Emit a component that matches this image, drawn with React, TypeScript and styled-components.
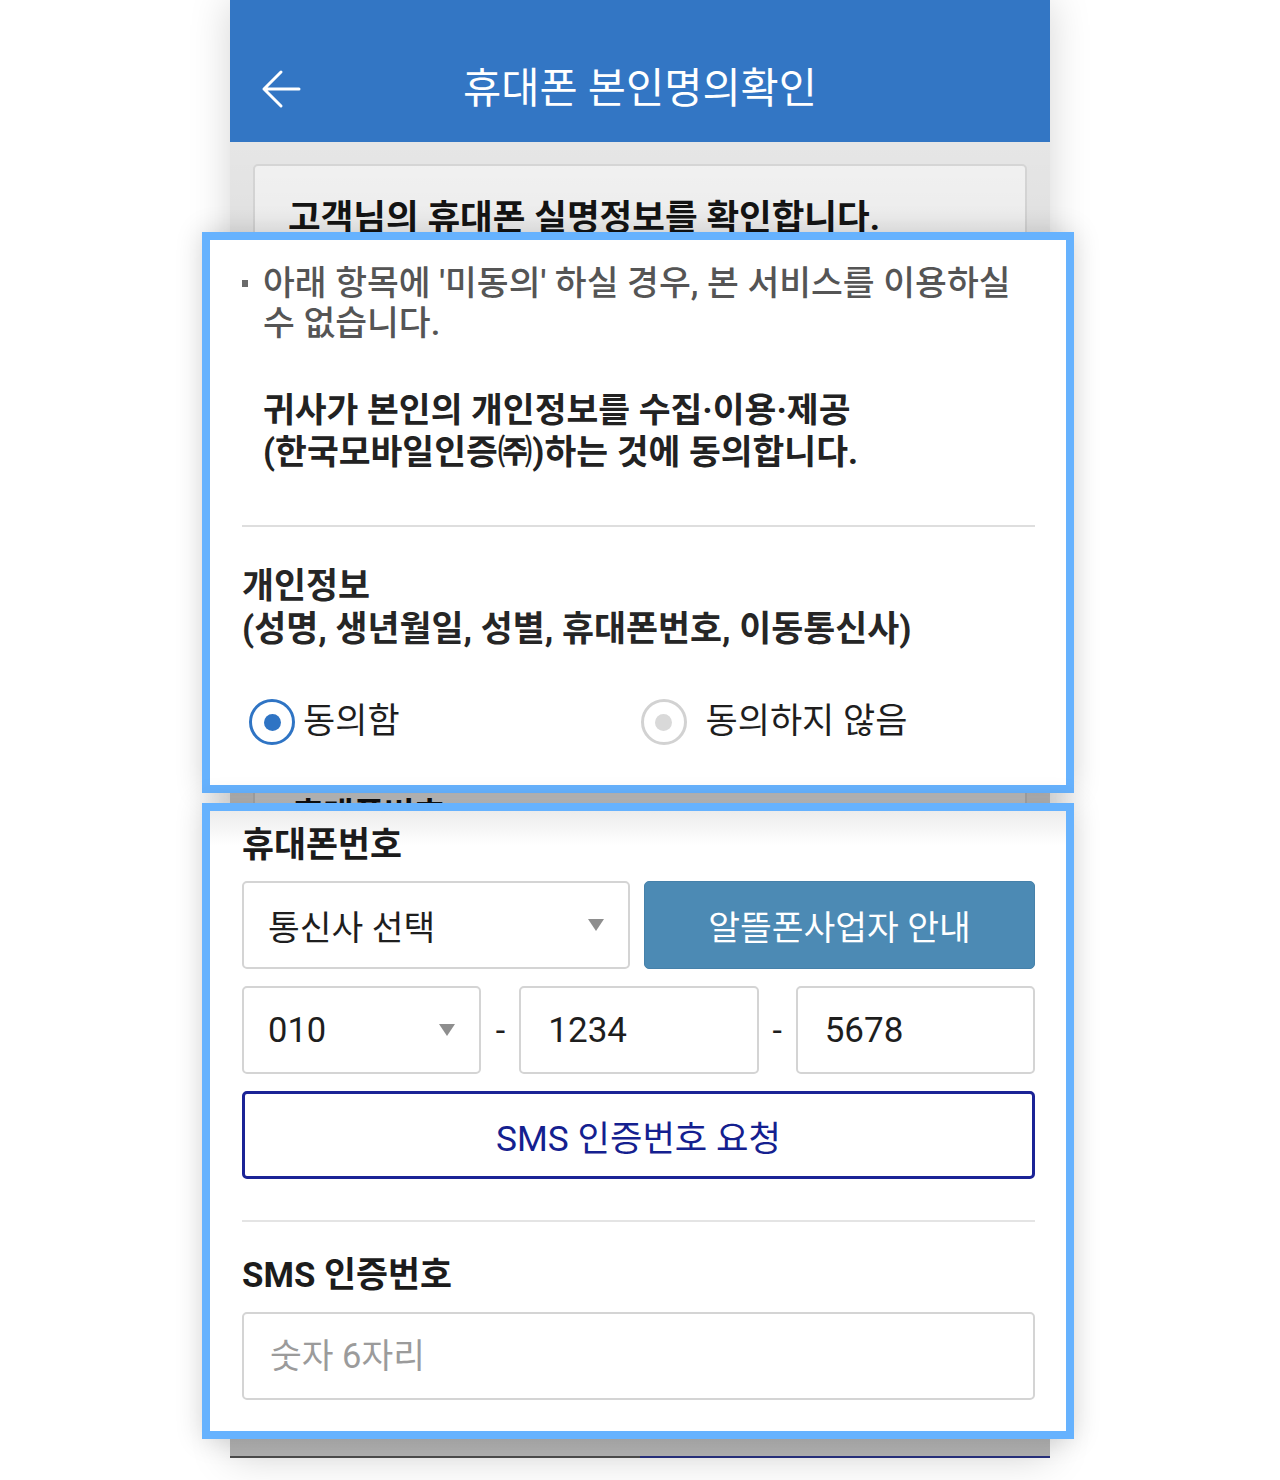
import React from "react";
import styled, { createGlobalStyle } from "styled-components";

const GlobalStyle = createGlobalStyle`
  html, body { margin: 0; padding: 0; background: #ffffff; }
  body { font-family: Roboto, "Noto Sans CJK KR", sans-serif; }
  * { box-sizing: border-box; }
`;

const Stage = styled.div`
  position: relative;
  width: 1280px;
  height: 1480px;
  overflow: hidden;
  background: #ffffff;
`;

/* ---------- phone screenshot (background) ---------- */

const Phone = styled.div`
  width: 820px;
  height: 1458px;
  margin: 0 auto;
  display: flex;
  flex-direction: column;
  background: #e6e6e6;
  box-shadow: 0 0 38px rgba(0, 0, 0, 0.17);
`;

const AppBar = styled.header`
  flex: none;
  height: 142px;
  padding-top: 35px;
  background: #3376c4;
  display: grid;
  grid-template-columns: 1fr auto 1fr;
  align-items: center;
`;

const BackButton = styled.button`
  justify-self: start;
  margin-left: 30px;
  width: 42px;
  height: 42px;
  padding: 0;
  border: none;
  background: transparent;
  display: flex;
  align-items: center;
  justify-content: center;
`;

const AppTitle = styled.h1`
  margin: 0;
  color: #ffffff;
  font-size: 41.5px;
  font-weight: 400;
  line-height: 50px;
`;

const Body = styled.main`
  position: relative;
  flex: 1;
  padding: 22px 23px 0;
  overflow: hidden;
  &::after {
    content: "";
    position: absolute;
    inset: 0;
    pointer-events: none;
    background: linear-gradient(
      rgba(0, 0, 0, 0) 0px,
      rgba(0, 0, 0, 0.19) 658px,
      rgba(0, 0, 0, 0.24) 100%
    );
  }
`;

const Card = styled.section`
  background: #f2f2f2;
  border: 2px solid #d6d6d6;
  border-radius: 5px;
  padding: 32px 33px 40px;
`;

const CardTitle = styled.h2`
  margin: 0;
  font-size: 35.5px;
  font-weight: 700;
  line-height: 40px;
  color: #141414;
`;

const HiddenSection = styled.div<{ $height: number }>`
  height: ${(p) => p.$height}px;
`;

const CardLabel = styled.div`
  padding-left: 5px;
  font-size: 33px;
  font-weight: 700;
  line-height: 40px;
  color: #141414;
`;

const FooterBar = styled.div`
  flex: none;
  height: 2px;
  display: flex;
`;

const FooterHalf = styled.div<{ $color: string }>`
  flex: 1;
  background: ${(p) => p.$color};
`;

/* ---------- callouts (overlay) ---------- */

const Callout = styled.div<{ $top: number; $height: number }>`
  position: absolute;
  left: 202px;
  top: ${(p) => p.$top}px;
  width: 872px;
  height: ${(p) => p.$height}px;
  border: 8px solid #66b2fe;
  background: #ffffff;
  box-shadow: 0 0 26px rgba(0, 0, 0, 0.16);
`;

const ConsentPanel = styled.div`
  height: 100%;
  padding: 23px 31px 0 32px;
  display: flex;
  flex-direction: column;
`;

const Notice = styled.div`
  display: flex;
  align-items: flex-start;
`;

const Bullet = styled.span`
  flex: none;
  width: 6px;
  height: 7px;
  margin: 17px 15px 0 0;
  background: #6a6a6a;
`;

const NoticeText = styled.p`
  margin: 0;
  font-size: 34.6px;
  font-weight: 500;
  line-height: 40px;
  color: #555555;
`;

const ConsentText = styled.p`
  margin: 46px 0 0 21px;
  font-size: 34.6px;
  font-weight: 700;
  line-height: 42px;
  color: #222222;
`;

const Divider = styled.hr<{ $mt: number; $color: string }>`
  margin: ${(p) => p.$mt}px 0 0;
  height: 2px;
  border: none;
  background: ${(p) => p.$color};
`;

const InfoTitle = styled.p`
  margin: 38px 0 0;
  font-size: 34.8px;
  font-weight: 700;
  line-height: 43px;
  color: #262626;
`;

const RadioRow = styled.div`
  margin-top: 46px;
  display: grid;
  grid-template-columns: 1fr 1fr;
  align-items: center;
`;

const RadioOption = styled.label<{ $offset: number; $gap: number }>`
  display: flex;
  align-items: center;
  gap: ${(p) => p.$gap}px;
  padding-left: ${(p) => p.$offset}px;
  font-size: 35px;
  font-weight: 400;
  line-height: 50px;
  color: #1e1e1e;
`;

const RadioCircle = styled.span<{ $checked: boolean }>`
  flex: none;
  width: 46px;
  height: 46px;
  border-radius: 50%;
  border: 3px solid ${(p) => (p.$checked ? "#2f74c4" : "#d2d2d2")};
  display: flex;
  align-items: center;
  justify-content: center;
  &::after {
    content: "";
    width: 17px;
    height: 17px;
    border-radius: 50%;
    background: ${(p) => (p.$checked ? "#2f74c4" : "#d9d9d9")};
  }
`;

const PhonePanel = styled.div`
  height: 100%;
  padding: 14px 31px 0 32px;
  display: flex;
  flex-direction: column;
  background: linear-gradient(#ececec 0px, #ffffff 34px);
`;

const SectionLabel = styled.div<{ $mt?: number }>`
  margin-top: ${(p) => p.$mt ?? 0}px;
  font-size: 34.8px;
  font-weight: 700;
  line-height: 40px;
  color: #1c1c1c;
`;

const Rows = styled.div`
  margin-top: 16px;
  display: flex;
  flex-direction: column;
  gap: 17px;
`;

const CarrierRow = styled.div`
  display: grid;
  grid-template-columns: 388px 1fr;
  gap: 14px;
  height: 88px;
`;

const NumberRow = styled.div`
  display: grid;
  grid-template-columns: 1fr 38px 1fr 37px 1fr;
  height: 88px;
`;

const Box = styled.div`
  height: 88px;
  border: 2px solid #d4d4d4;
  border-radius: 5px;
  background: #ffffff;
  display: flex;
  align-items: center;
  justify-content: space-between;
  padding: 0 24px 0 24px;
  font-size: 34.5px;
  font-weight: 400;
  color: #1e1e1e;
`;

const Caret = styled.span`
  width: 0;
  height: 0;
  border-left: 8px solid transparent;
  border-right: 8px solid transparent;
  border-top: 12px solid #8e8e8e;
`;

const TextField = styled.input`
  width: 100%;
  height: 88px;
  border: 2px solid #d4d4d4;
  border-radius: 5px;
  background: #ffffff;
  padding: 0 0 0 27px;
  font: inherit;
  font-size: 35px;
  color: #1e1e1e;
  outline: none;
  &::placeholder {
    color: #9b9b9b;
  }
`;

const Dash = styled.span`
  display: flex;
  align-items: center;
  justify-content: center;
  font-size: 34px;
  color: #1e1e1e;
`;

const InfoButton = styled.button`
  height: 88px;
  border: 1px solid #4681aa;
  border-radius: 5px;
  background: #4c8ab4;
  color: #ffffff;
  font: inherit;
  font-size: 34.5px;
  font-weight: 400;
`;

const SmsButton = styled.button`
  height: 88px;
  border: 3px solid #1b2396;
  border-radius: 5px;
  background: #ffffff;
  color: #14208f;
  font: inherit;
  font-size: 35.3px;
  font-weight: 400;
`;

const CodeField = styled(TextField)`
  margin-top: 17px;
  flex: none;
  padding-left: 26px;
  font-size: 34.5px;
`;

export default function App() {
  return (
    <Stage>
      <GlobalStyle />
      <Phone>
        <AppBar>
          <BackButton aria-label="뒤로">
            <svg width="40" height="40" viewBox="0 0 40 40" fill="none">
              <path
                d="M38 20H3M20 3L3 20L20 37"
                stroke="#ffffff"
                strokeWidth="3"
                strokeLinecap="round"
                strokeLinejoin="round"
              />
            </svg>
          </BackButton>
          <AppTitle>휴대폰 본인명의확인</AppTitle>
          <span />
        </AppBar>
        <Body>
          <Card>
            <CardTitle>고객님의 휴대폰 실명정보를 확인합니다.</CardTitle>
            <HiddenSection $height={557} />
            <CardLabel>휴대폰번호</CardLabel>
            <HiddenSection $height={520} />
          </Card>
        </Body>
        <FooterBar>
          <FooterHalf $color="#4b4b4b" />
          <FooterHalf $color="#27307b" />
        </FooterBar>
      </Phone>

      <Callout $top={232} $height={561}>
        <ConsentPanel>
          <Notice>
            <Bullet />
            <NoticeText>
              아래 항목에 '미동의' 하실 경우, 본 서비스를 이용하실
              <br />수 없습니다.
            </NoticeText>
          </Notice>
          <ConsentText>
            귀사가 본인의 개인정보를 수집·이용·제공
            <br />
            (한국모바일인증㈜)하는 것에 동의합니다.
          </ConsentText>
          <Divider $mt={52} $color="#dedede" />
          <InfoTitle>
            개인정보
            <br />
            (성명, 생년월일, 성별, 휴대폰번호, 이동통신사)
          </InfoTitle>
          <RadioRow>
            <RadioOption $offset={7} $gap={8}>
              <RadioCircle $checked />
              동의함
            </RadioOption>
            <RadioOption $offset={2} $gap={19}>
              <RadioCircle $checked={false} />
              동의하지 않음
            </RadioOption>
          </RadioRow>
        </ConsentPanel>
      </Callout>

      <Callout $top={803} $height={636}>
        <PhonePanel>
          <SectionLabel>휴대폰번호</SectionLabel>
          <Rows>
            <CarrierRow>
              <Box>
                통신사 선택
                <Caret />
              </Box>
              <InfoButton>알뜰폰사업자 안내</InfoButton>
            </CarrierRow>
            <NumberRow>
              <Box>
                010
                <Caret />
              </Box>
              <Dash>-</Dash>
              <TextField readOnly value="1234" />
              <Dash>-</Dash>
              <TextField readOnly value="5678" />
            </NumberRow>
            <SmsButton>SMS 인증번호 요청</SmsButton>
          </Rows>
          <Divider $mt={41} $color="#e4e4e4" />
          <SectionLabel $mt={33}>SMS 인증번호</SectionLabel>
          <CodeField placeholder="숫자 6자리" />
        </PhonePanel>
      </Callout>
    </Stage>
  );
}
